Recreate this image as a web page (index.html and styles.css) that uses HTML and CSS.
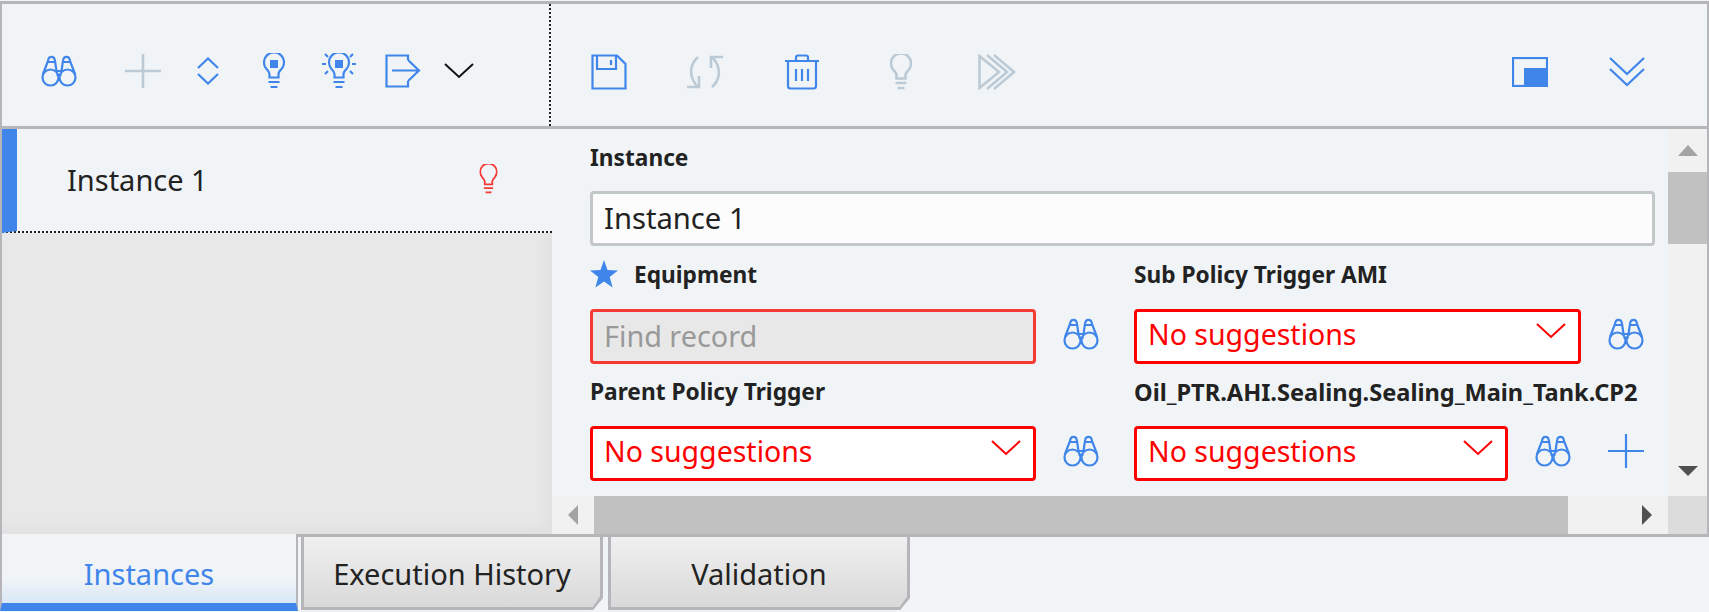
FILE: index.html
```html
<!DOCTYPE html>
<html lang="en">
<head>
<meta charset="utf-8">
<title>Policy Instances</title>
<link rel="stylesheet" href="styles.css">
</head>
<body>
<svg class="defs" width="0" height="0" aria-hidden="true">
  <symbol id="binoc" viewBox="0 0 36 32">
    <circle cx="9.500" cy="22.500" r="8" /><circle cx="26.500" cy="22.500" r="8" />
    <path d="M2 19 L7 6 C7.500 0.500 13.500 0.500 14 6 L15.500 16 M34 19 L29 6 C28.500 0.500 22.500 0.500 22 6 L20.500 16 M15.500 16 H20.500 M15.500 20 H20.500 M6.500 7 H14 M22 7 H29.500" />
  </symbol>
  <symbol id="bulb" viewBox="0 0 22 36">
    <path d="M6.500 24.500 V21 C6.500 19 5 17.500 3.500 16 A10 10 0 1 1 18.500 16 C17 17.500 15.500 19 15.500 21 V24.500 Z M5.500 29 H16.500 M7.500 34 H14.500" />
  </symbol>
</svg>
<main class="frame">
  <header class="toolbar">
    <div class="tool-left">
      <svg class="ic blue w36 first"><use href="#binoc"/></svg>
      <svg class="ic grey plus" viewBox="0 0 36 34"><path d="M18 0 V34 M0 17 H36"/></svg>
      <svg class="ic blue updown" viewBox="0 0 22 28"><path d="M1 11 L11 1.500 L21 11 M1 17 L11 26.500 L21 17"/></svg>
      <svg class="ic blue bulb1"><use href="#bulb"/><rect class="solid" x="7" y="7" width="8" height="8"/></svg>
      <svg class="ic blue bulb2" viewBox="0 0 34 36"><path d="M12.500 24.500 V21 C12.500 19 11 17.500 9.500 16 A10 10 0 1 1 24.500 16 C23 17.500 21.500 19 21.500 21 V24.500 Z M11.500 29 H22.500 M13.500 34 H20.500 M0 11 H4 M30 11 H34 M3 1 L6 4 M31 1 L28 4 M3 21 L6 18 M31 21 L28 18"/><rect class="solid" x="13" y="7" width="8" height="8"/></svg>
      <svg class="ic blue exit" viewBox="0 0 36 34"><path d="M23 6 V1.500 H1.500 V32.500 H23 V27 M7 16.500 H33 M23 6 L34 16.500 L23 27"/></svg>
      <svg class="ic dark chev" viewBox="0 0 30 16"><path d="M1 1 L15 14 L29 1"/></svg>
    </div>
    <div class="tool-right">
      <svg class="ic blue save" viewBox="0 0 36 36"><path d="M1.500 1.500 H26 L34.500 10 V34.500 H1.500 Z M6 1.500 V15 H25 V1.500 M20 6 V11"/></svg>
      <svg class="ic grey sync" viewBox="0 0 38 34"><path d="M12 2 C3 10 3 22 11 31 M1 32 H13 V21 M26 32 C35 24 35 12 27 3 M37 2 H25 V13"/></svg>
      <svg class="ic blue trash" viewBox="0 0 34 36"><path d="M0 7 H34 M11 6 V3.500 Q11 1.500 13 1.500 H21 Q23 1.500 23 3.500 V6 M3 7 V32 Q3 34.500 5.500 34.500 H28.500 Q31 34.500 31 32 V7 M11 15 V27 M17 15 V27 M23 15 V27"/></svg>
      <svg class="ic grey bulb3"><use href="#bulb"/></svg>
      <svg class="ic grey run" viewBox="0 0 38 36"><path d="M1.500 2 V34 L21 18 Z M9 1 L29 18 L9 35 M16 1 L36 18 L16 35"/></svg>
      <svg class="ic blue win" viewBox="0 0 36 30"><rect x="1" y="1" width="34" height="28"/><rect class="solid" x="12" y="11" width="23" height="18"/></svg>
      <svg class="ic blue dbl" viewBox="0 0 36 30"><path d="M1 1 L18 17 L35 1 M1 12 L18 28 L35 12"/></svg>
    </div>
  </header>
  <div class="body">
    <aside class="side">
      <div class="side-item">
        <span class="side-name">Instance 1</span>
        <svg class="ic red bulb-red" viewBox="0 0 22 36"><use href="#bulb"/></svg>
      </div>
    </aside>
    <section class="pane">
      <div class="pane-top">
        <form class="form">
          <div class="label label-first">Instance</div>
          <div class="input plain">Instance 1</div>
          <div class="grid">
            <div class="cell">
              <div class="label"><svg class="star" viewBox="0 0 28 28"><path d="M14 0 L17.500 10 L28 10.500 L19.700 17 L22.600 27.500 L14 21.500 L5.400 27.500 L8.300 17 L0 10.500 L10.500 10 Z"/></svg>Equipment</div>
              <div class="row">
                <div class="input disabled">Find record</div>
                <svg class="ic blue w36 row-ic"><use href="#binoc"/></svg>
              </div>
            </div>
            <div class="cell">
              <div class="label">Sub Policy Trigger AMI</div>
              <div class="row">
                <div class="input error wide">No suggestions<svg class="ic caret" viewBox="0 0 30 16"><path d="M1 1 L15 14 L29 1"/></svg></div>
                <svg class="ic blue w36 row-ic"><use href="#binoc"/></svg>
              </div>
            </div>
            <div class="cell">
              <div class="label">Parent Policy Trigger</div>
              <div class="row">
                <div class="input error">No suggestions<svg class="ic caret" viewBox="0 0 30 16"><path d="M1 1 L15 14 L29 1"/></svg></div>
                <svg class="ic blue w36 row-ic"><use href="#binoc"/></svg>
              </div>
            </div>
            <div class="cell">
              <div class="label label-long">Oil_PTR.AHI.Sealing.Sealing_Main_Tank.CP2</div>
              <div class="row">
                <div class="input error narrow">No suggestions<svg class="ic caret" viewBox="0 0 30 16"><path d="M1 1 L15 14 L29 1"/></svg></div>
                <svg class="ic blue w36 row-ic"><use href="#binoc"/></svg>
                <svg class="ic blue plus2" viewBox="0 0 36 34"><path d="M18 0 V34 M0 17 H36"/></svg>
              </div>
            </div>
          </div>
        </form>
        <div class="vscroll">
          <div class="vbtn"><span class="tri tri-up"></span></div>
          <div class="vthumb"></div>
          <div class="vtrack"></div>
          <div class="vbtn vbtn-end"><span class="tri tri-down"></span></div>
        </div>
      </div>
      <div class="hscroll">
        <div class="hbtn"><span class="tri tri-left"></span></div>
        <div class="hthumb"></div>
        <div class="htrack"><span class="tri tri-right"></span></div>
        <div class="corner"></div>
      </div>
    </section>
  </div>
</main>
<nav class="tabs">
  <div class="tab active">Instances</div>
  <div class="tab">Execution History</div>
  <div class="tab">Validation</div>
</nav>
</body>
</html>
```
FILE: styles.css
```css
* { box-sizing: border-box; }
html, body { margin: 0; padding: 0; }
body {
  width: 1709px;
  height: 612px;
  overflow: hidden;
  background: #f0f4f7;
  font-family: "Noto Sans", "Open Sans", sans-serif;
  color: #222;
}
.defs { position: absolute; }

.frame {
  margin-top: 1px;
  height: 536px;
  border: 3px solid #b5b5ba;
  border-left-width: 2px;
  border-right-width: 2px;
  display: flex;
  flex-direction: column;
}

.toolbar {
  height: 125px;
  flex: none;
  display: flex;
  border-bottom: 3px solid #b5b5ba;
}
.tool-left {
  width: 549px;
  flex: none;
  display: flex;
  align-items: center;
  padding-top: 12px;
  border-right: 2px dotted #222;
}
.tool-right {
  flex: 1;
  display: flex;
  align-items: center;
  padding-top: 14px;
}

.ic { display: block; flex: none; fill: none; stroke-width: 2.200; }
.ic.blue { stroke: #4086ea; }
.ic.grey { stroke: #bccad5; stroke-width: 2.600; }
.ic.dark { stroke: #111; stroke-width: 2; }
.ic.red { stroke: #f43a32; }
.solid { fill: #4086ea; stroke: none; }
.w36 { width: 36px; height: 32px; }
.first { margin-left: 39px; }
.plus { width: 36px; height: 34px; margin-left: 48px; }
.updown { width: 22px; height: 28px; margin-left: 36px; }
.bulb1 { width: 22px; height: 36px; margin-left: 44px; }
.bulb2 { width: 34px; height: 36px; margin-left: 37px; }
.exit { width: 36px; height: 34px; margin-left: 29px; }
.chev { width: 30px; height: 16px; margin-left: 23px; }
.save { width: 36px; height: 36px; margin-left: 40px; }
.sync { width: 38px; height: 34px; margin-left: 59px; }
.trash { width: 34px; height: 36px; margin-left: 61px; }
.bulb3 { width: 22px; height: 36px; margin-left: 71px; }
.run { width: 38px; height: 36px; margin-left: 66px; }
.win { width: 36px; height: 30px; margin-left: 496px; }
.dbl { width: 36px; height: 30px; margin-left: 61px; }
.bulb-red { width: 19px; height: 30px; stroke-width: 2.200; }

.body { flex: 1; min-height: 0; display: flex; }
.side {
  width: 550px;
  flex: none;
  background: #e8e8e8;
  box-shadow: inset -8px -8px 14px rgba(0, 0, 0, .03);
}
.side-item {
  height: 104px;
  display: flex;
  align-items: center;
  justify-content: space-between;
  padding: 0 54px 2px 50px;
  background: #f0f4f7;
  border-left: 15px solid #4086ea;
  border-bottom: 2px dotted #222;
}
.side-name { font-size: 29px; }

.pane { flex: 1; min-width: 0; display: flex; flex-direction: column; }
.pane-top { flex: 1; min-height: 0; display: flex; }
.form { flex: 1; min-width: 0; padding: 9px 13px 0 38px; }
.label {
  height: 57px;
  display: flex;
  align-items: center;
  font-size: 22.700px;
  font-weight: 700;
  line-height: 1;
  white-space: nowrap;
}
.label-first { height: 38px; margin-bottom: 15px; padding-top: 2px; }
.label-long { font-size: 23.600px; }
.star { width: 28px; height: 28px; margin: -3px 16px 0 0; fill: #4086ea; }
.input {
  height: 55px;
  border: 3px solid #c2c7c7;
  border-radius: 4px;
  background: #fcfcfc;
  font-size: 28.800px;
  display: flex;
  align-items: center;
  justify-content: space-between;
  padding: 0 11px 2px;
  width: 446px;
  white-space: nowrap;
}
.plain { width: 100%; font-size: 29.200px; }
.disabled { border-color: #f43a32; background: #e8e8e8; color: #999; }
.error { border-color: #f00; background: #fff; color: #f00; font-size: 28.500px; padding-bottom: 6px; }
.wide { width: 447px; }
.narrow { width: 374px; }
.caret { width: 30px; height: 16px; stroke: #f00; margin: -6px 1px 0 0; stroke-width: 2; }
.grid { display: grid; grid-template-columns: 544px 1fr; padding-top: 1px; }
.row { display: flex; align-items: center; margin-top: 5px; }
.row-ic { margin-left: 27px; margin-top: -5px; }
.plus2 { width: 36px; height: 34px; margin-left: 37px; margin-top: -6px; }

.vscroll {
  width: 39px;
  flex: none;
  display: flex;
  flex-direction: column;
  background: #f1f1f1;
}
.vbtn {
  height: 43px;
  display: flex;
  align-items: center;
  justify-content: center;
}
.vbtn-end { height: 50px; }
.vthumb { height: 72px; background: #c1c1c1; }
.vtrack { flex: 1; }
.hscroll { height: 38px; flex: none; display: flex; }
.hbtn {
  width: 42px;
  flex: none;
  background: #f1f1f1;
  display: flex;
  align-items: center;
  justify-content: center;
}
.hthumb { width: 974px; flex: none; background: #c1c1c1; }
.htrack {
  flex: 1;
  background: #f1f1f1;
  display: flex;
  align-items: center;
  justify-content: flex-end;
  padding-right: 16px;
}
.corner { width: 39px; flex: none; background: #dcdcdc; }

.tri { display: block; width: 0; height: 0; border-style: solid; border-color: transparent; }
.tri-up { border-width: 0 10px 11px; border-bottom-color: #a3a3a3; }
.tri-down { border-width: 10px 10px 0; border-top-color: #505050; }
.tri-left { border-width: 10px 10px 10px 0; border-right-color: #a3a3a3; }
.tri-right { border-width: 10px 0 10px 10px; border-left-color: #505050; }

.tabs {
  position: relative;
  margin-top: -3px;
  display: flex;
  align-items: flex-start;
  height: 78px;
}
.tab {
  position: relative;
  width: 302px;
  height: 76px;
  margin-left: 5px;
  padding-top: 3px;
  font-size: 29px;
  display: flex;
  align-items: center;
  justify-content: center;
  border: 3px solid #b5b5ba;
  background: linear-gradient(#f0f0f0, #d9d9d9);
  clip-path: polygon(0 0, 100% 0, 100% calc(100% - 12px), calc(100% - 10px) 100%, 0 100%);
}
.tab::after {
  content: "";
  position: absolute;
  right: -6px;
  bottom: 2px;
  width: 18px;
  height: 3px;
  background: #b5b5ba;
  transform: rotate(-55deg);
}
.tab.active {
  width: 298px;
  height: 77px;
  margin: 0 -2px 0 0;
  padding-top: 9px;
  border: 0;
  border-left: 2px solid #b5b5ba;
  border-right: 2px solid #b5b5ba;
  border-bottom: 8px solid #4086ea;
  background: linear-gradient(#f0f4f7 65%, #d8e7f7);
  color: #4086ea;
  clip-path: none;
}
.tab.active::after { content: none; }
```
